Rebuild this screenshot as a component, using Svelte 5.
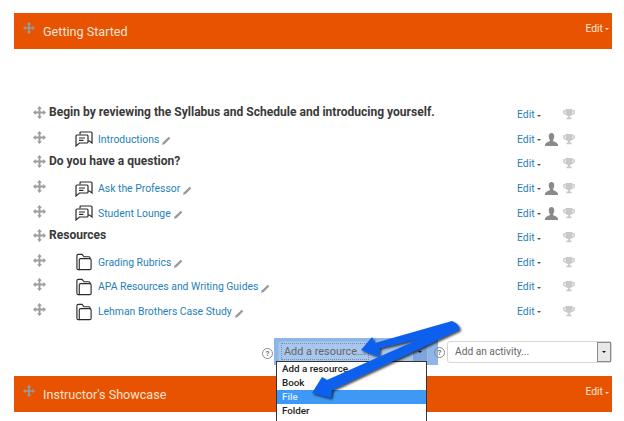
<script lang="ts">
    type Row = { kind: "label" | "forum" | "folder"; text: string; person?: boolean };

    const rows: Row[] = [
        { kind: "label", text: "Begin by reviewing the Syllabus and Schedule and introducing yourself." },
        { kind: "forum", text: "Introductions", person: true },
        { kind: "label", text: "Do you have a question?" },
        { kind: "forum", text: "Ask the Professor", person: true },
        { kind: "forum", text: "Student Lounge", person: true },
        { kind: "label", text: "Resources" },
        { kind: "folder", text: "Grading Rubrics" },
        { kind: "folder", text: "APA Resources and Writing Guides" },
        { kind: "folder", text: "Lehman Brothers Case Study" },
    ];

    const options = ["Add a resource...", "Book", "File", "Folder", "IMS content package"];
</script>

{#snippet move(color: string)}
    <svg class="move" viewBox="0 0 14 14" fill={color}>
        <path d="M7 0 9.6 3H8v3h3V4.400l3 2.600-3 2.600V8H8v3h1.600L7 14l-2.600-3H6V8H3v1.600L0 7l3-2.600V6h3V3H4.400z" />
    </svg>
{/snippet}

{#snippet pencil()}
    <svg class="pencil" viewBox="0 0 10 10">
        <path d="M0 10 1 7 7.500 .8 9.300 2.600 3 9z" fill="#9a9a9a" />
    </svg>
{/snippet}

{#snippet banner(title: string)}
    <div class="banner">
        {@render move("#8f9ea5")}
        <span class="title">{title}</span>
        <span class="banner-edit">Edit<i class="caret"></i></span>
    </div>
{/snippet}

<div class="page">
    {@render banner("Getting Started")}

    <div class="rows">
        {#each rows as row}
            <div class="row" class:label={row.kind === "label"}>
                {@render move("#9c9c9c")}
                {#if row.kind === "label"}
                    <strong>{row.text}</strong>
                {:else}
                    <span class="activity">
                        {#if row.kind === "forum"}
                            <svg class="icon" viewBox="0 0 18 17" fill="none" stroke="#2b2b2b" stroke-width="1.200">
                                <path d="M5 4V2.500Q5 1.500 6 1.500H16Q17 1.500 17 2.500V12.500L14.500 10.500H13" />
                                <path d="M2 4.500H12Q13 4.500 13 5.500V11.500Q13 12.500 12 12.500H4.500L1 15.500V5.500Q1 4.500 2 4.500Z" />
                                <path d="M4 7.500H10M4 9.800H8.500" />
                            </svg>
                        {:else}
                            <svg class="icon" viewBox="0 0 18 19" fill="none" stroke="#2b2b2b" stroke-width="1.200">
                                <path d="M4 17.500H3Q1.500 17.500 1.500 16V3Q1.500 1.500 3 1.500H7L9 4H14Q15.500 4 15.500 5.500V6" />
                                <path d="M4 17.500H15Q16.500 17.500 16.500 16V7.500Q16.500 6 15 6H5.500Q4 6 4 7.500Z" />
                            </svg>
                        {/if}
                        <a href="#top">{row.text}</a>
                        {@render pencil()}
                    </span>
                {/if}
                <span class="actions">
                    <span class="edit">Edit<i class="caret"></i></span>
                    <span class="person">
                        {#if row.person}
                            <svg viewBox="0 0 14 14" fill="#8a8a8a">
                                <path d="M7 0C9 0 10 1.500 10 3.500S9 7 8.500 8C9 9.500 14 10 14 13V14H0V13C0 10 5 9.500 5.500 8 5 7 4 5.500 4 3.500S5 0 7 0Z" />
                            </svg>
                        {/if}
                    </span>
                    <svg class="trophy" viewBox="0 0 14 13" fill="#c9c9c9">
                        <path d="M3 0H11V1.500H14V3.500Q14 6.500 10.500 7 9.500 8 8 8.300V10H10V12H4V10H6V8.300Q4.500 8 3.500 7 0 6.500 0 3.500V1.500H3ZM1.500 3V3.500Q1.500 5 3 5.500 3 4 3 3ZM12.500 3H11Q11 4 11 5.500 12.500 5 12.500 3.500Z" />
                    </svg>
                </span>
            </div>
        {/each}
    </div>

    <div class="add-bar">
        <div class="resource">
            <span class="help">?</span>
            <div class="select focused">
                <span class="value"><span class="dotted">Add a resource...</span></span>
                <span class="drop"><i class="caret dark"></i></span>
            </div>
            <ul class="menu">
                {#each options as option}
                    <li class:active={option === "File"} class:cut={option === "IMS content package"}>{option}</li>
                {/each}
            </ul>
        </div>
        <span class="help">?</span>
        <div class="select activity-select">
            <span class="value">Add an activity...</span>
            <span class="drop"><i class="caret dark"></i></span>
        </div>
    </div>

    {@render banner("Instructor's Showcase")}

    <!-- callout arrows drawn on top of the screenshot -->
    <svg class="arrows" viewBox="0 0 624 421">
        <defs>
            <filter id="shadow" x="-10%" y="-20%" width="120%" height="140%">
                <feDropShadow dx="1.500" dy="1.500" stdDeviation="1" flood-color="#000" flood-opacity="0.750" />
            </filter>
        </defs>
        <g fill="#0b60ee" filter="url(#shadow)">
            <path d="M452 321 Q461 325 459 330 L380 348 L379 357 L361 350 L372 337 L375 343Z" />
            <path d="M417 340 L450 327 L459 330 L332 390 L331 398 L312 393 L322 377 L327 380Z" />
        </g>
    </svg>
</div>

<style>
    :global(body) {
        margin: 0;
        background: #fff;
    }

    .page {
        position: relative;
        height: 421px;
        overflow: hidden;
        padding: 13px 12px 0 14px;
        box-sizing: border-box;
        font-family: Roboto, "Liberation Sans", sans-serif;
        font-size: 10.400px;
    }

    .banner {
        display: flex;
        align-items: center;
        height: 36px;
        padding: 0 3px 0 9px;
        background: #e75300;
        color: #f6e3d6;
    }
    .banner .move {
        width: 12px;
        height: 12px;
        margin-top: -6px;
    }
    .title {
        margin-left: 8px;
        font-size: 12.600px;
    }
    .banner-edit {
        margin-left: auto;
        margin-top: -5px;
        color: #fbe6d8;
    }

    .rows {
        margin-top: 53.500px;
        padding-left: 19px;
    }

    .row {
        display: flex;
        align-items: center;
        height: 24.600px;
    }
    .row .move {
        width: 13px;
        height: 13px;
        flex: none;
    }
    strong {
        margin-left: 3px;
        margin-top: -6px;
        font-size: 12.050px;
        color: #3a3a3a;
    }
    .label .move {
        margin-top: -4px;
    }

    .activity {
        display: flex;
        align-items: center;
        margin-left: 29px;
    }
    .row:not(.label) .move {
        margin-top: -4px;
    }
    .icon {
        width: 18px;
        height: 18px;
        margin-right: 5px;
    }
    a {
        color: #1f7fb8;
        text-decoration: none;
    }
    .pencil {
        width: 9px;
        height: 9px;
        margin: 3px 0 0 3px;
    }

    .actions {
        display: flex;
        align-items: center;
        margin-left: auto;
        margin-right: 37px;
    }
    .edit {
        width: 28px;
        color: #1f7fb8;
    }
    .person {
        width: 18px;
        height: 13px;
    }
    .person svg {
        display: block;
        width: 13px;
        height: 13px;
    }
    .trophy {
        width: 12px;
        height: 11px;
    }

    .caret {
        display: inline-block;
        margin-left: 2px;
        vertical-align: middle;
        border: 2.500px solid transparent;
        border-top-color: currentColor;
        border-bottom: 0;
    }
    .edit .caret {
        color: #555;
    }

    .add-bar {
        display: flex;
        align-items: center;
        justify-content: flex-end;
        height: 27px;
        margin: 14.500px 0 11px;
        color: #666;
    }
    .resource {
        position: relative;
        display: flex;
        align-items: center;
        width: 164px;
        height: 27px;
        box-sizing: border-box;
        padding-left: 3px;
        margin-right: 10px;
        background: #8fb6e8;
    }
    .resource .help {
        position: absolute;
        left: -12px;
        top: 10px;
    }
    .help {
        display: grid;
        place-items: center;
        width: 11px;
        height: 11px;
        box-sizing: border-box;
        border: 1.500px solid #8a8a8a;
        border-radius: 50%;
        font-size: 8px;
        font-weight: 700;
        color: #777;
    }
    .add-bar > .help {
        margin: 2px -14px 0 -14px;
        position: relative;
    }

    .select {
        display: flex;
        align-items: stretch;
        height: 22px;
        box-sizing: border-box;
        border: 1px solid #d6d6d6;
        border-radius: 3px;
        background: #fff;
    }
    .focused {
        width: 150px;
        margin-left: 1px;
        background: #a9c6ec;
        border-color: #9fbce4;
    }
    .activity-select {
        width: 165px;
        margin-left: 16px;
    }
    .value {
        flex: 1;
        padding-left: 7px;
        line-height: 20px;
        font-size: 10.200px;
        color: #666;
    }
    .focused .value {
        padding-left: 5px;
        font-size: 10.900px;
    }
    .dotted {
        outline: 1px dotted #6d8fbd;
        padding: 1px 2px;
        margin-left: -2px;
    }
    .drop {
        display: grid;
        place-items: center;
        width: 12px;
        border: 1px solid #8a8a8a;
        background: #e8e8e8;
    }
    .focused .drop {
        background: #7fa6dc;
        border-color: #7fa6dc;
    }
    .caret.dark {
        margin: 0;
        color: #111;
    }

    .menu {
        position: absolute;
        left: 2px;
        top: 23px;
        width: 151px;
        box-sizing: border-box;
        margin: 0;
        padding: 0;
        list-style: none;
        background: #fff;
        border: 1px solid #333;
        font-size: 9.800px;
        font-weight: 500;
        color: #222;
        z-index: 2;
    }
    .menu li {
        height: 14px;
        line-height: 14px;
        padding-left: 5px;
    }
    .menu .active {
        background: #3d99f5;
        color: #dfeefc;
    }
    .menu .cut {
        color: #aaa;
    }

    .arrows {
        position: absolute;
        inset: 0;
        width: 624px;
        height: 421px;
        pointer-events: none;
        z-index: 3;
    }
</style>
